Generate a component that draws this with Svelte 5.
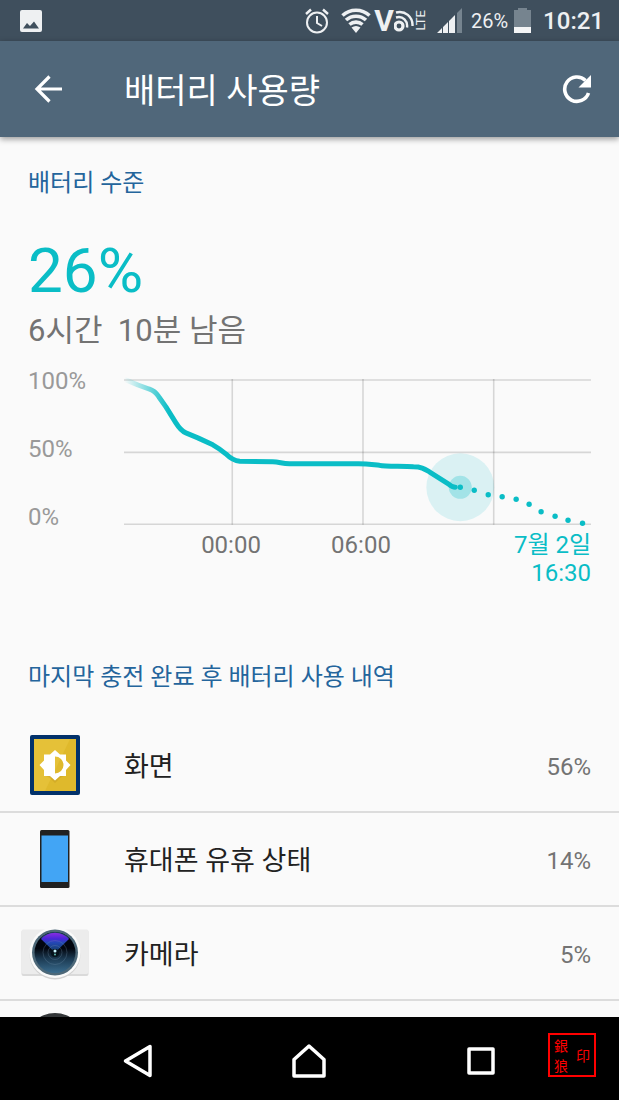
<script>
    const level = 26;

    const usage = [
        { icon: 'screen', name: '화면', percent: 56 },
        { icon: 'phone', name: '휴대폰 유휴 상태', percent: 14 },
        { icon: 'camera', name: '카메라', percent: 5 },
        { icon: 'system' }
    ];

    const forecast = [
        [337, 108.5], [351, 111.5], [365, 116], [379, 118], [393, 120.5],
        [406, 125.5], [418, 133], [432, 137.5], [445, 141.5], [459.5, 144.5]
    ];
</script>

<div class="screen">
    <div class="status">
        <svg class="picture" width="22" height="22" viewBox="0 0 22 22">
            <path fill="#eef0f2" fill-rule="evenodd" d="M2 0h18a2 2 0 0 1 2 2v18a2 2 0 0 1-2 2H2a2 2 0 0 1-2-2V2a2 2 0 0 1 2-2zM3 18.500h16l-5-7-4 4.500-3-3z" />
        </svg>
        <svg class="alarm" width="24" height="26" viewBox="0 0 24 26" fill="none" stroke="#eef0f2" stroke-width="2">
            <circle cx="12" cy="14.500" r="10" />
            <path d="M12 8v7l5 3" />
            <path stroke-width="2.400" d="M1 6l5-4.500M23 6l-5-4.500" />
        </svg>
        <svg class="wifi" width="30" height="26" viewBox="0 0 30 26" fill="none" stroke="#eef0f2" stroke-width="3.600">
            <path d="M1.500 7.500a20 20 0 0 1 27 0" />
            <path d="M5 12a15 15 0 0 1 20 0" />
            <path d="M8.500 16.500a10 10 0 0 1 13 0" />
            <path fill="#eef0f2" stroke="none" d="M10.500 19.500q4.500-3 9 0L15 25z" />
        </svg>
        <div class="volte">
            <b>V</b>
            <svg width="20" height="24" viewBox="0 0 20 24" fill="none" stroke="#eef0f2">
                <circle cx="5" cy="17" r="4" stroke-width="3.200" />
                <path stroke-width="2.400" d="M2 8.500C9 6.500 14 12 13 18.500M2 3.500C11 1 19 8 18.500 17" />
            </svg>
            <span class="lte">LTE</span>
        </div>
        <svg class="signal" width="26" height="25" viewBox="0 0 26 25">
            <path fill="#eef0f2" d="M0 25l5-5v5zM6 19l5-5v11H6zM12 13l5-5v17h-5zM13 12l5-5v18h-5z" />
            <path fill="#76848f" d="M20 5l5-5v25h-5z" />
            <path stroke="#3f4f5d" d="M5.500 18v7M11.500 12v13" />
        </svg>
        <span class="level">{level}%</span>
        <svg class="cell" width="17" height="26" viewBox="0 0 17 26">
            <path fill="#76848f" d="M4 0h9v2h4v17H0V2h4z" />
            <path fill="#f4f5f6" d="M0 19h17v6H0z" />
        </svg>
        <time class="clock">10:21</time>
    </div>

    <header>
        <button class="back" aria-label="뒤로">
            <svg width="28" height="28" viewBox="0 0 28 28" fill="none" stroke="#fff" stroke-width="3.200">
                <path d="M28 14H3M15.500 1.500L3 14l12.500 12.500" />
            </svg>
        </button>
        <h1>배터리 사용량</h1>
        <button class="reload" aria-label="새로고침">
            <svg width="30" height="30" viewBox="0 0 30 30">
                <path fill="none" stroke="#fff" stroke-width="3.600" d="M26.500 19A12.200 12.200 0 1 1 23.500 6.500" />
                <path fill="#fff" d="M29 1v12.500H16.500z" />
            </svg>
        </button>
    </header>

    <main>
        <section class="summary">
            <h2>배터리 수준</h2>
            <p class="big">{level}%</p>
            <p class="remaining">6시간&nbsp; 10분 남음</p>

            <div class="chart">
                <div class="y-axis">
                    <span>100%</span>
                    <span>50%</span>
                    <span>0%</span>
                </div>
                <svg class="plot" viewBox="0 0 468 146">
                    <defs>
                        <linearGradient id="fade" gradientUnits="userSpaceOnUse" x1="0" y1="0" x2="45" y2="0">
                            <stop offset="0" stop-color="#0abdc6" stop-opacity="0" />
                            <stop offset="1" stop-color="#0abdc6" />
                        </linearGradient>
                    </defs>
                    <g stroke="#000" stroke-opacity="0.14" stroke-width="1.600">
                        <path d="M0 1h468M0 73.500h468M0 145.500h468" />
                        <path d="M108.500 0v146M239.500 0v146M370.500 0v146" />
                    </g>
                    <circle cx="337" cy="108.500" r="34" fill="#0abdc6" fill-opacity="0.130" />
                    <circle cx="337" cy="108.500" r="11.500" fill="#0abdc6" fill-opacity="0.270" />
                    <path
                        fill="none"
                        stroke="url(#fade)"
                        stroke-width="5"
                        stroke-linecap="round"
                        stroke-linejoin="round"
                        d="M2 1L14 6L25 10Q31 12 35 18L42 28L52 44Q57 52 62 54L74 59L89 66Q96 70 102 75Q109 82 116 82.500L149 83C156 83 158 85 166 85L235 85C245 85 250 86 256 86.500C263 88 280 87 290 88C298 88 301 90 306 93L325 105Q329 108.500 332 108.500"
                    />
                    {#each forecast as [x, y]}
                        <circle cx={x} cy={y} r="2.700" fill="#0abdc6" />
                    {/each}
                </svg>
                <div class="x-axis">
                    <span>00:00</span>
                    <span>06:00</span>
                    <span class="end">7월 2일<br />16:30</span>
                </div>
            </div>
        </section>

        <section>
            <h2 class="list-title">마지막 충전 완료 후 배터리 사용 내역</h2>
            <ul>
                {#each usage as item}
                    <li>
                        {#if item.icon === 'screen'}
                            <svg width="50" height="60" viewBox="0 0 50 60">
                                <rect width="50" height="60" rx="2" fill="#02316a" />
                                <path fill="#dfb92c" d="M4 4h42v52H4z" />
                                <path fill="#e5c138" d="M4 4h36L15 56H4z" />
                                <path fill="#b8901f" fill-opacity="0.300" d="M14 40h6l5 5 5-5h6l-6 3-5 5-5-5z" />
                                <path fill="#fff" fill-rule="evenodd" d="M25 15l5 4.500h6v6l4.500 4.500-4.500 5v6h-6l-5 4.500-5-4.500h-6v-6L9.500 30l4.500-4.500v-6h6zM25 21.500v17a8.500 8.500 0 0 0 0-17z" />
                            </svg>
                        {:else if item.icon === 'phone'}
                            <svg width="30" height="58" viewBox="0 0 30 58">
                                <rect width="29.500" height="58" rx="1.500" fill="#212121" />
                                <path fill="#42a5f5" d="M1.500 5.500h26.500v46.500H1.500z" />
                            </svg>
                        {:else if item.icon === 'camera'}
                            <svg width="68" height="54" viewBox="0 0 68 54">
                                <defs>
                                    <linearGradient id="lens" x1="0" y1="0" x2="0" y2="1">
                                        <stop offset="0.400" stop-color="#02060f" />
                                        <stop offset="0.650" stop-color="#1c3a52" />
                                        <stop offset="1" stop-color="#3a6c8e" />
                                    </linearGradient>
                                    <linearGradient id="glare" x1="0" y1="0" x2="0" y2="1">
                                        <stop offset="0" stop-color="#8a2be2" />
                                        <stop offset="0.300" stop-color="#4a26d8" />
                                        <stop offset="0.500" stop-color="#2348b4" />
                                        <stop offset="1" stop-color="#123c5c" />
                                    </linearGradient>
                                </defs>
                                <rect x="0.500" y="4" width="67" height="46" rx="2" fill="#dadada" />
                                <rect x="0.500" y="3.500" width="67" height="44.500" rx="2" fill="#ececec" />
                                <circle cx="34" cy="28" r="25.500" fill="#d2d2d2" />
                                <circle cx="34" cy="26.500" r="25.500" fill="#fafafa" />
                                <circle cx="34" cy="26.500" r="23" fill="#4d6878" />
                                <circle cx="34" cy="26.500" r="20.500" fill="url(#lens)" />
                                <path fill="#23507a" d="M20 12A20 20 0 0 1 48 12L34 26.500z" />
                                <path fill="url(#glare)" d="M34 26.500L20 13a19 19 0 0 1 28 0z" />
                                <g fill="none" stroke="#7190a8" stroke-opacity="0.300">
                                    <circle cx="34" cy="26.500" r="7" />
                                    <circle cx="34" cy="26.500" r="12" />
                                </g>
                                <circle cx="34" cy="27" r="4" fill="#06131c" />
                                <circle cx="34" cy="25" r="1.500" fill="#c8f4ff" />
                                <circle cx="34" cy="28.500" r="1" fill="#62b9b0" />
                            </svg>
                        {:else}
                            <svg width="60" height="68" viewBox="0 0 60 68">
                                <circle cx="30" cy="30" r="30" fill="#333638" />
                            </svg>
                        {/if}
                        {#if item.name}
                            <span class="name">{item.name}</span>
                            <span class="percent">{item.percent}%</span>
                        {/if}
                    </li>
                {/each}
            </ul>
        </section>
    </main>

    <nav>
        <button aria-label="뒤로">
            <svg width="30" height="34" viewBox="0 0 30 34" fill="none" stroke="#fff" stroke-width="3.500" stroke-linejoin="round">
                <path d="M27 2.500v29L2.500 17z" />
            </svg>
        </button>
        <button aria-label="홈">
            <svg width="34" height="34" viewBox="0 0 34 34" fill="none" stroke="#fff" stroke-width="3.500" stroke-linejoin="round">
                <path d="M17 2l15 13.500V32H2V15.500z" />
            </svg>
        </button>
        <button aria-label="최근 앱">
            <svg width="28" height="28" viewBox="0 0 28 28" fill="none" stroke="#fff" stroke-width="3.500" stroke-linejoin="round">
                <path d="M2 2h24v24H2z" />
            </svg>
        </button>
        <div class="seal" lang="zh-Hant">
            <span>銀<br />狼</span>
            <span>印</span>
        </div>
    </nav>
</div>

<style>
    :global(body) {
        margin: 0;
    }

    .screen {
        display: flex;
        flex-direction: column;
        height: 100vh;
        background: #fafafa;
        color: #212121;
        font-family: Roboto, "Noto Sans CJK KR", sans-serif;
        font-size: 24px;
        line-height: 28px;
    }

    svg {
        display: block;
        flex: none;
    }

    h1, h2, p, ul {
        margin: 0;
        padding: 0;
        font-weight: 400;
    }

    button {
        display: flex;
        align-items: center;
        justify-content: center;
        padding: 0;
        border: 0;
        background: none;
        cursor: pointer;
    }

    .status {
        display: flex;
        align-items: center;
        flex: none;
        height: 41px;
        padding: 0 15px 0 20px;
        background: #3f4f5d;
        color: #eef0f2;
    }

    .picture {
        margin-right: auto;
    }

    .wifi {
        margin-left: 12px;
    }

    .volte {
        display: flex;
        align-items: center;
        margin-left: 3px;
    }

    .volte b {
        font-size: 30px;
    }

    .lte {
        font-size: 13px;
        line-height: 13px;
        writing-mode: vertical-rl;
        transform: rotate(180deg);
    }

    .signal {
        margin-left: 10px;
    }

    .level {
        margin-left: 8px;
        font-size: 20px;
    }

    .cell {
        margin-left: 6px;
    }

    .clock {
        margin-left: 12px;
        font-weight: 500;
    }

    header {
        display: flex;
        align-items: center;
        flex: none;
        height: 96px;
        padding: 0 20px;
        background: #50677a;
        color: #fff;
        box-shadow: 0 2px 6px rgba(0, 0, 0, 0.4);
        z-index: 1;
    }

    .back {
        width: 56px;
        height: 56px;
    }

    h1 {
        flex: 1;
        margin-left: 48px;
        padding-top: 4px;
        font-size: 34px;
        line-height: 48px;
    }

    .reload {
        width: 44px;
        height: 56px;
    }

    main {
        flex: 1;
        min-height: 0;
        overflow-y: auto;
        scrollbar-width: none;
    }

    .summary {
        padding: 30px 28px 0;
    }

    h2 {
        color: #24659c;
        font-size: 24px;
        line-height: 32px;
    }

    .big {
        margin-top: 40px;
        color: #0abdc6;
        font-size: 62px;
        line-height: 64px;
    }

    .remaining {
        margin-top: 10px;
        color: #737373;
        font-size: 31px;
        line-height: 36px;
    }

    .chart {
        display: grid;
        grid-template-columns: 96px 1fr;
        margin-top: 18px;
    }

    .y-axis {
        display: flex;
        flex-direction: column;
        justify-content: space-between;
        color: #999;
    }

    .plot {
        width: 100%;
        margin: 12px 0 6px;
        overflow: visible;
    }

    /* columns are centred under the vertical grid lines */
    .x-axis {
        display: grid;
        grid-column: 2;
        grid-template-columns: 130fr 130fr 165fr;
        padding-left: 9%;
        color: #737373;
        text-align: center;
    }

    .end {
        color: #0abdc6;
        text-align: right;
    }

    .list-title {
        padding: 74px 28px 26px;
    }

    ul {
        list-style: none;
    }

    li {
        display: grid;
        grid-template-columns: 70px 1fr auto;
        column-gap: 34px;
        align-items: center;
        box-sizing: border-box;
        height: 94px;
        padding: 0 28px 0 20px;
        border-bottom: 2px solid #dcdcdc;
    }

    li svg {
        justify-self: center;
    }

    .name {
        padding-top: 4px;
        font-size: 27px;
    }

    .percent {
        padding-top: 4px;
        color: #737373;
    }

    nav {
        position: relative;
        display: grid;
        grid-template-columns: repeat(3, 1fr);
        flex: none;
        height: 83px;
        padding: 4px 52px 0;
        box-sizing: border-box;
        background: #000;
    }

    .seal {
        position: absolute;
        top: 16px;
        right: 23px;
        display: flex;
        align-items: center;
        justify-content: space-between;
        box-sizing: border-box;
        width: 48px;
        height: 44px;
        padding: 0 4px;
        border: 2px solid #f00;
        color: #f00;
        font-family: "Noto Sans CJK TC", sans-serif;
        font-size: 14px;
        line-height: 20px;
    }
</style>
